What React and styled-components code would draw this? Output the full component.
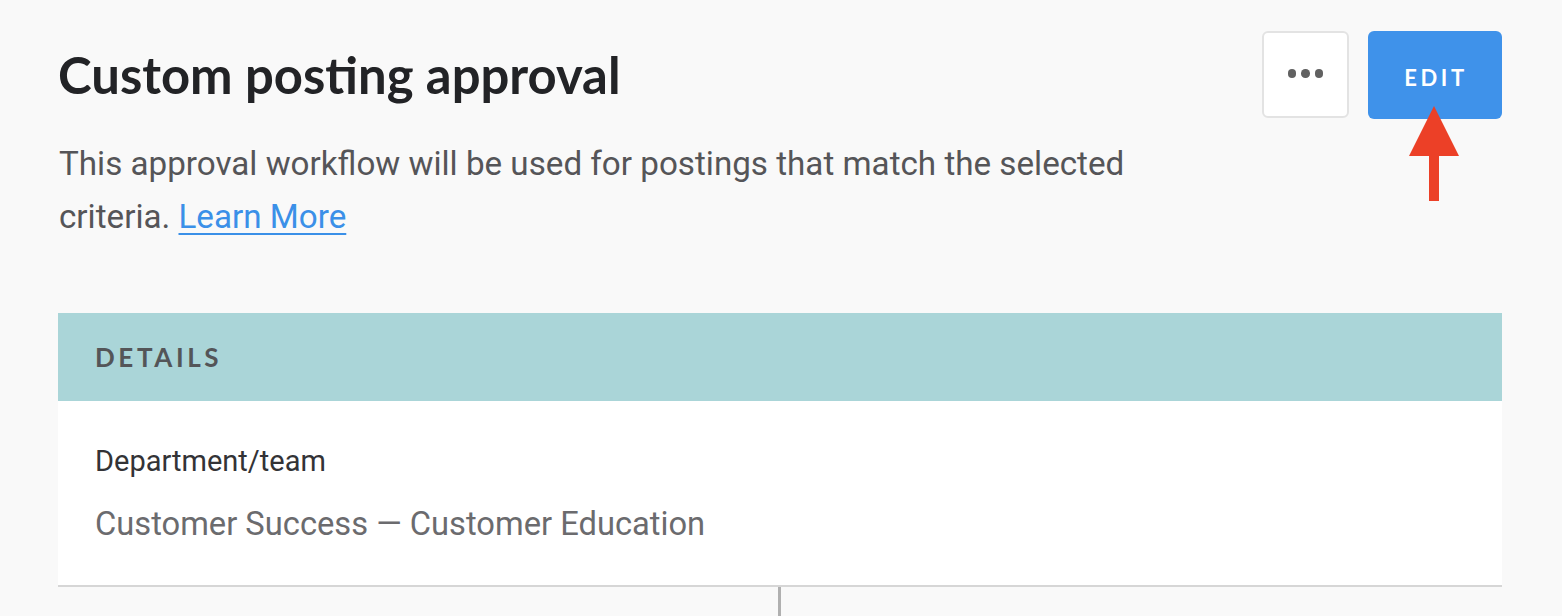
import React from "react";
import styled, { createGlobalStyle } from "styled-components";

const GlobalStyle = createGlobalStyle`
  html, body { margin: 0; padding: 0; }
  body {
    background: #f9f9f9;
    font-family: Roboto, "Noto Sans", "Liberation Sans", sans-serif;
    -webkit-font-smoothing: antialiased;
  }
`;

const Page = styled.div`
  padding: 31px 60px 0 58px;
  min-height: 616px;
  box-sizing: border-box;
  overflow: hidden;
`;

const Header = styled.div`
  display: flex;
  justify-content: space-between;
  align-items: flex-start;
`;

const Intro = styled.div`
  max-width: 1090px;
`;

const Title = styled.h1`
  margin: 14px 0 0 0;
  font-family: Lato, sans-serif;
  font-size: 50.8px;
  line-height: 60px;
  font-weight: 700;
  color: #222326;
`;

const Description = styled.p`
  margin: 32px 0 0 1px;
  font-size: 33.2px;
  line-height: 53px;
  color: #555558;
`;

const Link = styled.a`
  display: inline-block;
  line-height: 40px;
  color: #3b90e8;
  text-decoration: underline;
  text-underline-offset: 5px;
  text-decoration-thickness: 2px;
`;

const Actions = styled.div`
  display: flex;
  gap: 19px;
  position: relative;
`;

const MoreButton = styled.button`
  width: 87px;
  height: 87px;
  box-sizing: border-box;
  border: 2px solid #e3e3e3;
  border-radius: 6px;
  background: #ffffff;
  display: flex;
  align-items: center;
  justify-content: center;
  gap: 5px;
  padding: 0 0 2px 0;
  cursor: pointer;
`;

const Dot = styled.span`
  width: 8.5px;
  height: 8.5px;
  border-radius: 50%;
  background: #616161;
`;

const EditButton = styled.button`
  width: 134px;
  height: 88px;
  border: none;
  border-radius: 6px;
  background: #3f92ea;
  color: #ffffff;
  font-family: Lato, sans-serif;
  font-weight: 700;
  font-size: 22px;
  letter-spacing: 3.6px;
  padding: 4px 0 0 2px;
  cursor: pointer;
`;

const Arrow = styled.svg`
  position: absolute;
  left: 146px;
  top: 75px;
`;

const Panel = styled.section`
  margin-top: 70px;
  background: #ffffff;
  border-bottom: 2px solid #d6d6d6;
`;

const PanelHeader = styled.div`
  height: 88px;
  background: #aad5d8;
  display: flex;
  align-items: center;
  padding-left: 37px;
  font-family: Lato, sans-serif;
  font-size: 26px;
  font-weight: 700;
  letter-spacing: 3.6px;
  color: #545558;
`;

const PanelBody = styled.div`
  padding: 41px 37px 39px;
`;

const FieldLabel = styled.div`
  font-size: 29px;
  line-height: 38px;
  color: #333336;
`;

const FieldValue = styled.div`
  margin-top: 22px;
  font-size: 32.7px;
  line-height: 44px;
  color: #6b6b6e;
`;

const Connector = styled.div`
  width: 3px;
  height: 40px;
  background: #b0b0b0;
  margin-left: 720px;
`;

export default function App() {
  return (
    <>
      <GlobalStyle />
      <Page>
        <Header>
          <Intro>
            <Title>Custom posting approval</Title>
            <Description>
              This approval workflow will be used for postings that match the selected criteria.{" "}
              <Link href="#">Learn More</Link>
            </Description>
          </Intro>
          <Actions>
            <MoreButton aria-label="More">
              <Dot />
              <Dot />
              <Dot />
            </MoreButton>
            <EditButton>EDIT</EditButton>
            <Arrow width="52" height="96" viewBox="0 0 52 96">
              <polygon points="26,0 51,50 1,50" fill="#ec4027" />
              <rect x="21" y="49" width="10" height="46" fill="#ec4027" />
            </Arrow>
          </Actions>
        </Header>
        <Panel>
          <PanelHeader>DETAILS</PanelHeader>
          <PanelBody>
            <FieldLabel>Department/team</FieldLabel>
            <FieldValue>Customer Success — Customer Education</FieldValue>
          </PanelBody>
        </Panel>
        <Connector />
      </Page>
    </>
  );
}
